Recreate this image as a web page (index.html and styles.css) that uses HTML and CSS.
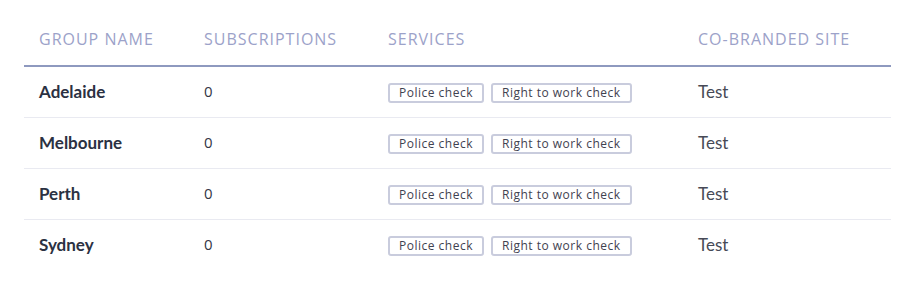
FILE: index.html
```html
<!DOCTYPE html>
<html lang="en">
<head>
  <meta charset="UTF-8">
  <title>Groups</title>
  <link rel="stylesheet" href="styles.css">
</head>
<body>
  <div class="wrap">
    <table class="groups">
      <thead>
        <tr>
          <th class="col-name">GROUP NAME</th>
          <th class="col-subs">SUBSCRIPTIONS</th>
          <th class="col-services">SERVICES</th>
          <th class="col-site">CO-BRANDED SITE</th>
        </tr>
      </thead>
      <tbody>
        <tr>
          <td class="name">Adelaide</td>
          <td class="subs">0</td>
          <td><span class="tag">Police check</span><span class="tag">Right to work check</span></td>
          <td class="site">Test</td>
        </tr>
        <tr>
          <td class="name">Melbourne</td>
          <td class="subs">0</td>
          <td><span class="tag">Police check</span><span class="tag">Right to work check</span></td>
          <td class="site">Test</td>
        </tr>
        <tr>
          <td class="name">Perth</td>
          <td class="subs">0</td>
          <td><span class="tag">Police check</span><span class="tag">Right to work check</span></td>
          <td class="site">Test</td>
        </tr>
        <tr>
          <td class="name">Sydney</td>
          <td class="subs">0</td>
          <td><span class="tag">Police check</span><span class="tag">Right to work check</span></td>
          <td class="site">Test</td>
        </tr>
      </tbody>
    </table>
  </div>
</body>
</html>
```

FILE: styles.css
```css
html,
body {
  margin: 0;
  padding: 0;
  background: #fff;
}

.wrap {
  padding: 20px 24px 0 24px;
}

.groups {
  width: 100%;
  border-collapse: collapse;
  font-family: "Open Sans", "Liberation Sans", sans-serif;
}

.groups th {
  text-align: left;
  font-weight: 400;
  font-size: 16px;
  letter-spacing: 1px;
  color: #9ca2c9;
  padding: 8px 15px 15px 15px;
  border-bottom: 2px solid #8e99bf;
  height: 20px;
}

.col-name {
  width: 135px;
}

.col-subs {
  width: 154px;
}

.col-services {
  width: 280px;
}

.groups td {
  padding: 0 15px 2px 15px;
  height: 48px;
  border-bottom: 1px solid #e9eaf1;
  color: #333;
}

.groups tbody tr:last-child td {
  border-bottom: none;
}

.name {
  font-family: "Lato", sans-serif;
  font-weight: 700;
  font-size: 17px;
  color: #2b3142 !important;
}

.subs {
  font-size: 15px;
  letter-spacing: 0.5px;
  color: #333645 !important;
}

.tag {
  display: inline-block;
  font-size: 12px;
  letter-spacing: 0.5px;
  line-height: 16px;
  color: #3f4250;
  border: 2px solid #c9ccdd;
  border-radius: 3px;
  padding: 0 9px;
  margin-right: 7px;
}

.site {
  font-family: "Lato", sans-serif;
  font-weight: 400;
  font-size: 17px;
  color: #474a56 !important;
}
```
